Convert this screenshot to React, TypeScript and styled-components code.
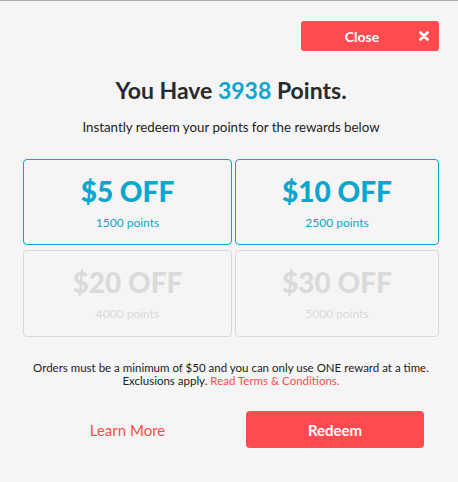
import React from "react";
import styled, { createGlobalStyle } from "styled-components";

const Global = createGlobalStyle`
  html, body { margin: 0; padding: 0; background: #f5f5f5; }
  body { font-family: Lato, "Open Sans", sans-serif; }
`;

const Page = styled.div`
  box-sizing: border-box;
  width: 458px;
  height: 482px;
  border-top: 1px solid #aaaaaa;
  background: #f5f5f5;
  padding: 20px 19px 0 23px;
  display: flex;
  flex-direction: column;
`;

const TopBar = styled.div`
  display: flex;
  justify-content: flex-end;
`;

const CloseButton = styled.button`
  position: relative;
  box-sizing: border-box;
  width: 138px;
  height: 30px;
  border: none;
  border-radius: 3px;
  background: #ff4b4f;
  color: #fff;
  font-family: inherit;
  font-size: 14px;
  font-weight: 700;
  padding: 0 16px 0 0;
  display: flex;
  align-items: center;
  justify-content: center;
  cursor: pointer;
`;

const CloseX = styled.span`
  position: absolute;
  right: 10px;
  top: 10px;
  width: 10px;
  height: 10px;
  display: flex;
`;

const Title = styled.h1`
  margin: 24px 0 0;
  text-align: center;
  font-size: 23px;
  font-weight: 700;
  color: #2a2a2a;
  line-height: 30px;
`;

const Highlight = styled.span`
  color: #0aa6cf;
`;

const Subtitle = styled.p`
  margin: 13px 0 0;
  text-align: center;
  font-size: 13.3px;
  color: #222;
  line-height: 18px;
`;

const Grid = styled.div`
  margin-top: 23px;
  display: grid;
  grid-template-columns: 209px 204px;
  grid-template-rows: 86px 87px;
  column-gap: 3px;
  row-gap: 5px;
`;

const Card = styled.div<{ $active: boolean }>`
  box-sizing: border-box;
  border: 1px solid ${(p) => (p.$active ? "#0aa6cf" : "#d9d9d9")};
  border-radius: 4px;
  padding-top: 15px;
  display: flex;
  flex-direction: column;
  align-items: center;
  color: ${(p) => (p.$active ? "#0aa6cf" : "#dadada")};
`;

const Amount = styled.div`
  font-size: 28px;
  font-weight: 900;
  line-height: 32px;
`;

const Pts = styled.div`
  font-size: 12px;
  line-height: 16px;
  margin-top: 8px;
`;

const Note = styled.p`
  margin: 24px 0 0;
  text-align: center;
  font-size: 11.5px;
  line-height: 13px;
  color: #222;
`;

const Link = styled.a`
  color: #ff4b4f;
  text-decoration: none;
`;

const Actions = styled.div`
  margin-top: 24px;
  display: grid;
  grid-template-columns: 209px 204px;
  column-gap: 3px;
  align-items: center;
`;

const LearnMore = styled.a`
  justify-self: center;
  color: #ff4b4f;
  font-size: 15px;
  text-decoration: none;
`;

const Redeem = styled.button`
  justify-self: center;
  margin-right: 4px;
  width: 178px;
  height: 37px;
  border: none;
  border-radius: 4px;
  background: #ff4b4f;
  color: #fff;
  font-family: inherit;
  font-size: 15px;
  font-weight: 700;
  cursor: pointer;
`;

const rewards = [
  { off: "$5 OFF", pts: "1500 points", active: true },
  { off: "$10 OFF", pts: "2500 points", active: true },
  { off: "$20 OFF", pts: "4000 points", active: false },
  { off: "$30 OFF", pts: "5000 points", active: false },
];

export default function App() {
  return (
    <>
      <Global />
      <Page>
        <TopBar>
          <CloseButton>
            Close
            <CloseX>
              <svg width="10" height="10" viewBox="0 0 10 10">
                <path d="M1.5 1.5 L8.5 8.5 M8.5 1.5 L1.5 8.5" stroke="#fff" strokeWidth="2.8" strokeLinecap="round" />
              </svg>
            </CloseX>
          </CloseButton>
        </TopBar>
        <Title>
          You Have <Highlight>3938</Highlight> Points.
        </Title>
        <Subtitle>Instantly redeem your points for the rewards below</Subtitle>
        <Grid>
          {rewards.map((r) => (
            <Card key={r.off} $active={r.active}>
              <Amount>{r.off}</Amount>
              <Pts>{r.pts}</Pts>
            </Card>
          ))}
        </Grid>
        <Note>
          Orders must be a minimum of $50 and you can only use ONE reward at a time.
          <br />
          Exclusions apply. <Link href="#">Read Terms &amp; Conditions.</Link>
        </Note>
        <Actions>
          <LearnMore href="#">Learn More</LearnMore>
          <Redeem>Redeem</Redeem>
        </Actions>
      </Page>
    </>
  );
}
